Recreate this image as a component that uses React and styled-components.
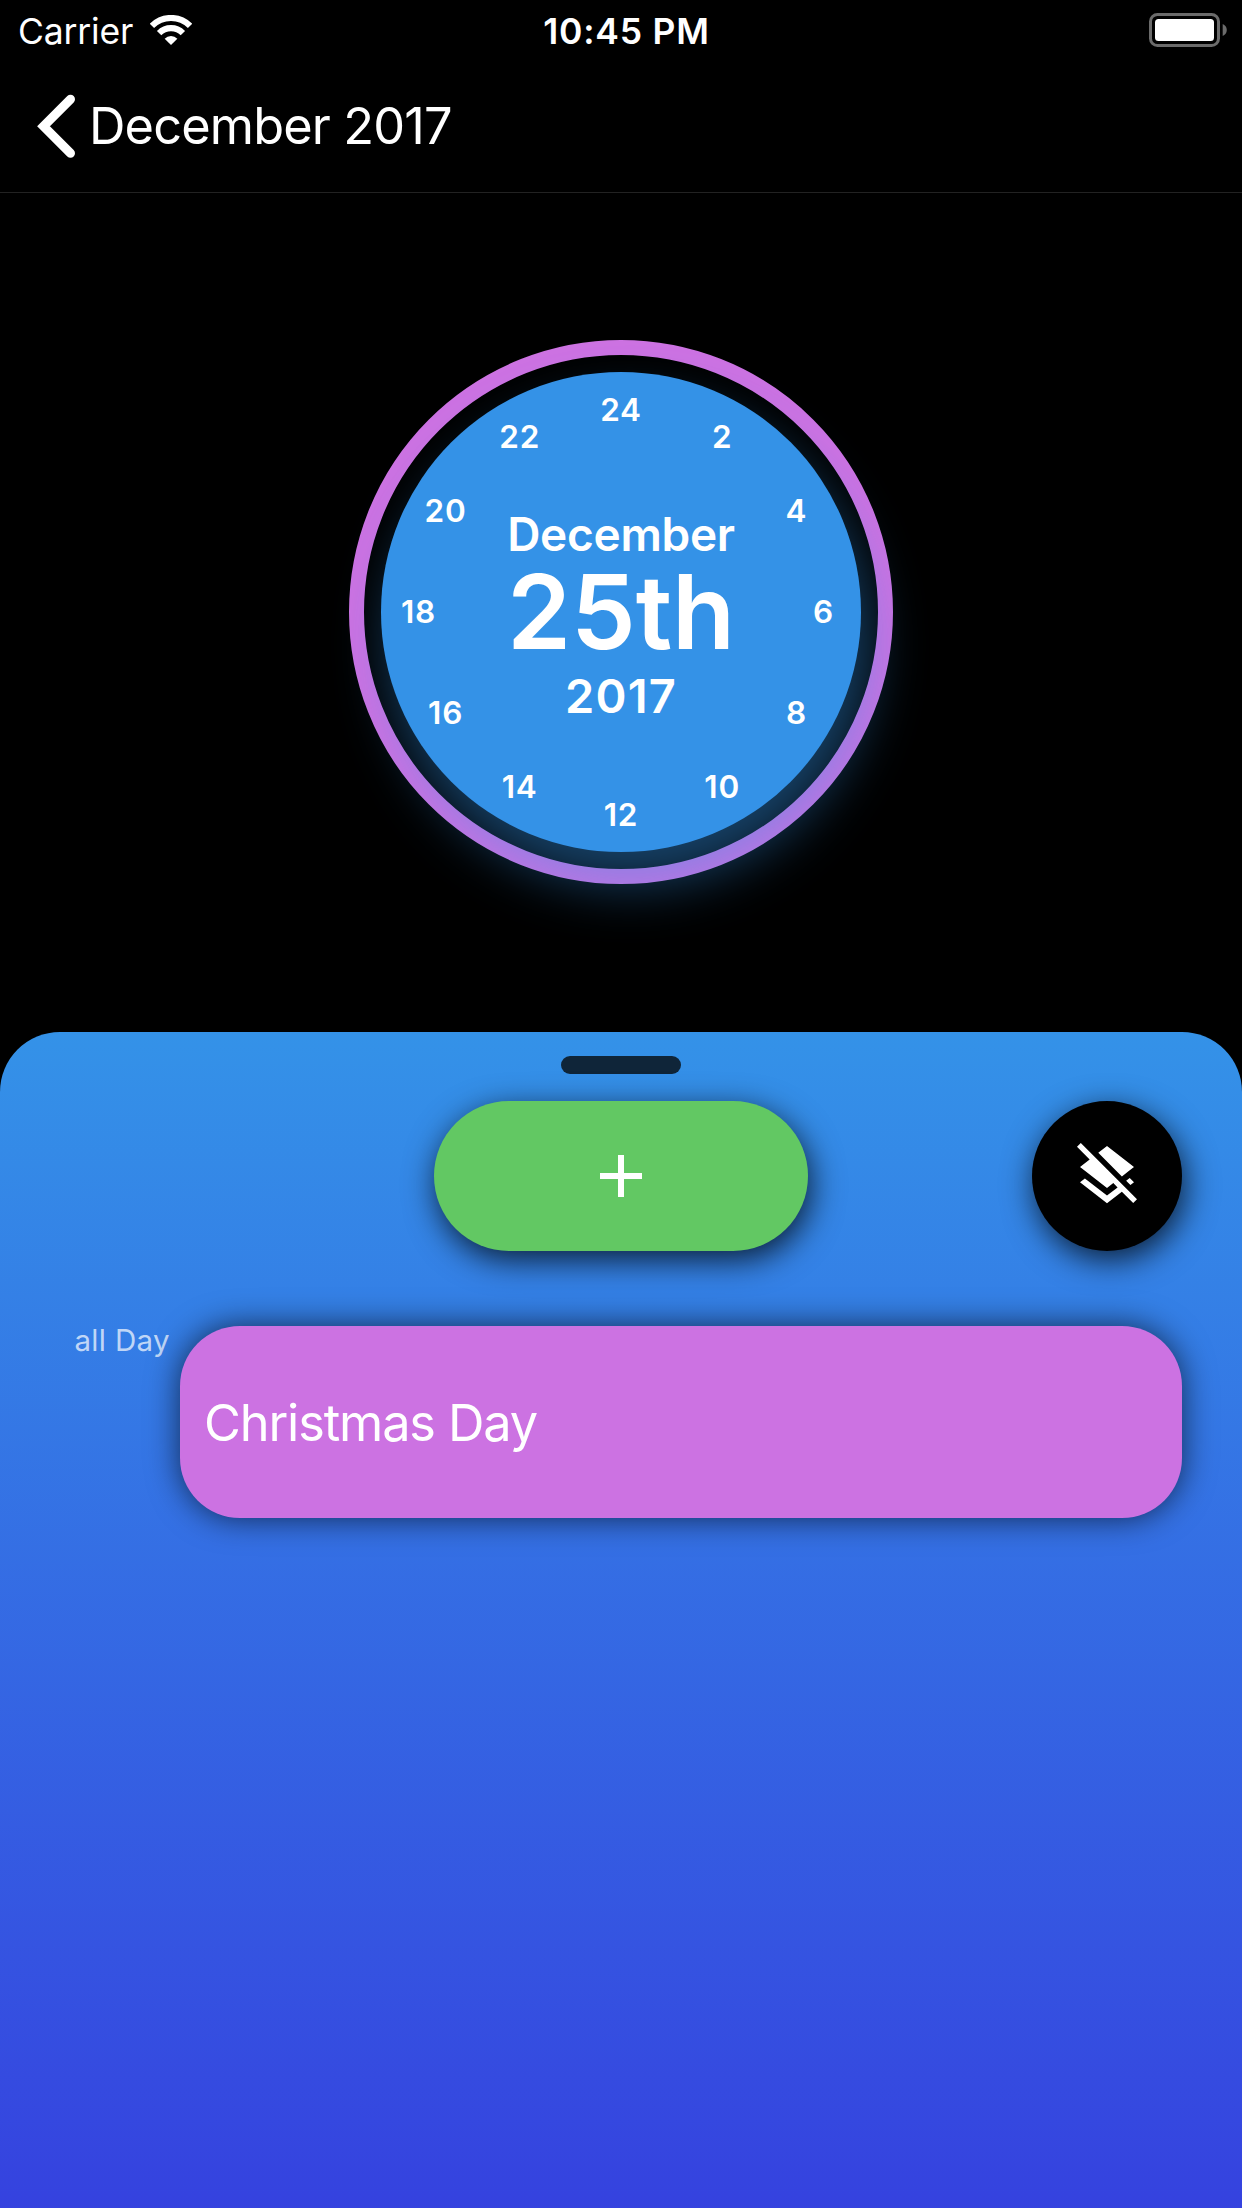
import React from "react";
import styled, { createGlobalStyle } from "styled-components";
import { MdAdd, MdLayersClear } from "react-icons/md";

const GlobalStyle = createGlobalStyle`
  *, *::before, *::after { box-sizing: border-box; }
  body {
    margin: 0;
    background: #000;
    color: #fff;
    font-family: Inter, "Liberation Sans", sans-serif;
  }
  button { font: inherit; color: inherit; border: 0; padding: 0; background: none; }
`;

const Screen = styled.main`
  width: 1242px;
  height: 2208px;
  display: flex;
  flex-direction: column;
  background: #000;
  overflow: hidden;
  white-space: nowrap;
`;

const StatusBar = styled.div`
  height: 60px;
  display: grid;
  grid-template-columns: 1fr auto 1fr;
  align-items: center;
  padding: 0 15px 0 18px;
`;

const StatusGroup = styled.div`
  display: flex;
  align-items: center;
  gap: 17px;
  justify-content: ${(p) => (p.$end ? "flex-end" : "flex-start")};
`;

const StatusText = styled.span`
  font-size: 35.5px;
  line-height: 40px;
  padding-top: 3px;
  font-weight: ${(p) => (p.$strong ? 570 : 380)};
  letter-spacing: ${(p) => p.$spacing}px;
  margin-left: ${(p) => p.$shift || 0}px;
`;

const Header = styled.header`
  height: 133px;
  display: flex;
  align-items: center;
  padding-left: 36px;
  border-bottom: 1px solid #222;
`;

const BackButton = styled.button`
  display: flex;
  align-items: center;
  gap: 11px;
`;

const BackLabel = styled.span`
  font-size: 50.5px;
  line-height: 60px;
  font-weight: 370;
  letter-spacing: ${(p) => p.$spacing}px;
`;

const ClockArea = styled.section`
  height: 839px;
  display: flex;
  align-items: center;
  justify-content: center;
  padding-bottom: 1px;
`;

const Ring = styled.div`
  width: 544px;
  height: 544px;
  border: 15px solid #cc72e2;
  border-radius: 50%;
  display: flex;
  align-items: center;
  justify-content: center;
`;

const Dial = styled.div`
  position: relative;
  width: 480px;
  height: 480px;
  flex: none;
  padding-top: 12px;
  border-radius: 50%;
  background: #3492e7;
  box-shadow: 9px 32px 54px rgba(52, 146, 231, 0.45);
  display: flex;
  flex-direction: column;
  align-items: center;
  justify-content: center;
`;

const DialText = styled.span`
  font-weight: 570;
  font-size: ${(p) => p.$size}px;
  line-height: ${(p) => p.$line}px;
  letter-spacing: ${(p) => p.$spacing}px;
`;

const Hour = styled.span`
  position: absolute;
  left: 50%;
  top: 50%;
  font-size: 31.5px;
  line-height: 36px;
  font-weight: 570;
  letter-spacing: 0.8px;
`;

const Sheet = styled.section`
  flex: 1;
  display: flex;
  flex-direction: column;
  padding: 24px 60px 0;
  border-radius: 60px 60px 0 0;
  background: linear-gradient(#3492e8, #3542df);
`;

const Handle = styled.div`
  width: 120px;
  height: 18px;
  border-radius: 9px;
  background: #0f2539;
  align-self: center;
`;

const Actions = styled.div`
  margin-top: 27px;
  display: grid;
  grid-template-columns: 1fr auto 1fr;
`;

const ActionButton = styled.button`
  width: ${(p) => p.$width}px;
  height: 150px;
  border-radius: 75px;
  background: ${(p) => p.$color};
  display: flex;
  align-items: center;
  justify-content: center;
  box-shadow: 3px 9px 32px rgba(0, 0, 0, 0.77);
  grid-column: ${(p) => p.$column};
  justify-self: end;
`;

const EventRow = styled.div`
  margin-top: 75px;
  display: grid;
  grid-template-columns: 120px 1fr;
`;

const EventTime = styled.span`
  padding-right: 10px;
  text-align: right;
  font-size: 29.5px;
  line-height: 29px;
  letter-spacing: 0.35px;
  color: rgba(255, 255, 255, 0.7);
`;

const EventCard = styled.article`
  height: 192px;
  border-radius: 60px;
  padding-left: 24px;
  padding-top: 2px;
  display: flex;
  align-items: center;
  background: #cc72e2;
  box-shadow: 0 0 32px rgba(0, 0, 0, 0.65);
`;

const EventTitle = styled.span`
  font-size: 50.5px;
  line-height: 60px;
  font-weight: 370;
  letter-spacing: -1.15px;
`;

const hours = [24, 2, 4, 6, 8, 10, 12, 14, 16, 18, 20, 22];
const HOUR_RADIUS = 202.5;

function hourOffset(hour) {
  const angle = (hour / 24) * Math.PI * 2;
  const x = Math.sin(angle) * HOUR_RADIUS;
  const y = -Math.cos(angle) * HOUR_RADIUS;
  return `translate(calc(-50% + ${x.toFixed(1)}px), calc(-50% + ${y.toFixed(1)}px))`;
}

const WifiIcon = () => (
  <svg width="42" height="30" viewBox="0 0 42 30" fill="none" stroke="#fff" strokeWidth="6.2">
    <path d="M1.91 10.91A27 27 0 0 1 40.09 10.91" />
    <path d="M9.12 18.12A16.8 16.8 0 0 1 32.88 18.12" />
    <path d="M14.64 23.64A9 9 0 0 1 27.36 23.64L21 30Z" fill="#fff" stroke="none" />
  </svg>
);

const BatteryIcon = () => (
  <svg width="78" height="34" viewBox="0 0 78 34">
    <rect x="1.5" y="1.5" width="68" height="31" rx="7" fill="none" stroke="#6b6b6b" strokeWidth="3" />
    <rect x="6" y="6" width="59" height="22" rx="3.5" fill="#fff" />
    <path d="M73.7 11C76 12 77.8 14.3 77.8 17S76 22 73.7 23Z" fill="#6b6b6b" />
  </svg>
);

const ChevronIcon = () => (
  <svg width="42" height="66" viewBox="0 0 42 66" fill="none" stroke="#fff" strokeWidth="9" strokeLinecap="round">
    <path d="M34.5 6.2L7.5 33.2L34.5 60.2" />
  </svg>
);

export default function App() {
  return (
    <>
      <GlobalStyle />
      <Screen>
        <StatusBar>
          <StatusGroup>
            <StatusText $spacing={-0.15}>Carrier</StatusText>
            <WifiIcon />
          </StatusGroup>
          <StatusText $strong $spacing={0.8} $shift={8}>10:45 PM</StatusText>
          <StatusGroup $end>
            <BatteryIcon />
          </StatusGroup>
        </StatusBar>
        <Header>
          <BackButton>
            <ChevronIcon />
            <BackLabel $spacing={-0.85}>December 2017</BackLabel>
          </BackButton>
        </Header>
        <ClockArea>
          <Ring>
            <Dial>
              {hours.map((h) => (
                <Hour key={h} style={{ transform: hourOffset(h) }}>{h}</Hour>
              ))}
              <DialText $size={46} $line={55} $spacing={-0.3}>December</DialText>
              <DialText $size={103} $line={100} $spacing={-0.2}>25th</DialText>
              <DialText $size={47} $line={67} $spacing={1.2}>2017</DialText>
            </Dial>
          </Ring>
        </ClockArea>
        <Sheet>
          <Handle />
          <Actions>
            <ActionButton $width={374} $color="#62c863" $column={2} aria-label="Add event">
              <MdAdd size={72} />
            </ActionButton>
            <ActionButton $width={150} $color="#000" $column={3} aria-label="Hide layers">
              <MdLayersClear size={72} />
            </ActionButton>
          </Actions>
          <EventRow>
            <EventTime>all Day</EventTime>
            <EventCard>
              <EventTitle>Christmas Day</EventTitle>
            </EventCard>
          </EventRow>
        </Sheet>
      </Screen>
    </>
  );
}
